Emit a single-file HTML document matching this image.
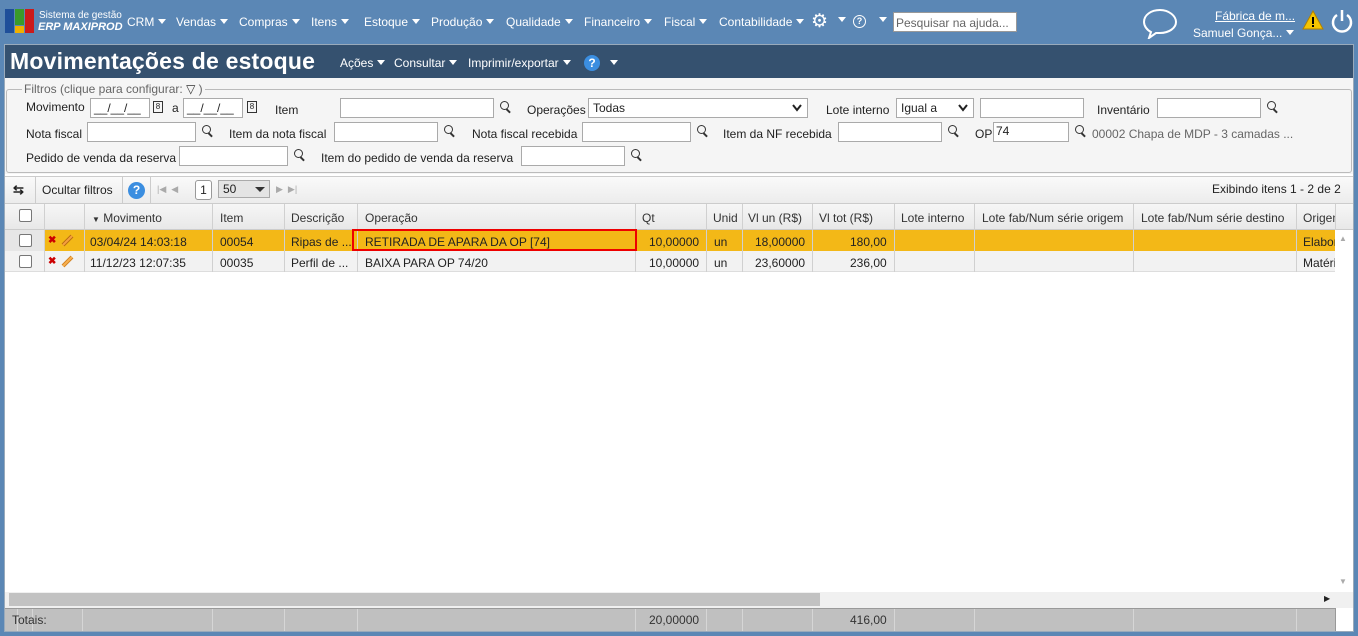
<!DOCTYPE html>
<html><head><meta charset="utf-8"><style>
*{box-sizing:border-box;margin:0;padding:0}
body{width:1358px;height:636px;overflow:hidden;background:#5b87b5;font-family:"Liberation Sans",sans-serif;font-size:12px;color:#222;position:relative}
.a{position:absolute;white-space:nowrap}
.w{color:#fff}
.tri{display:inline-block;width:0;height:0;border-left:4px solid transparent;border-right:4px solid transparent;border-top:5px solid #fff;vertical-align:2px;margin-left:4px}
.inp{position:absolute;height:20px;background:#fff;border:1px solid #aaa}
.mag{position:absolute;width:9px;height:9px;border:1.5px solid #333;border-radius:50%}
.mag:after{content:"";position:absolute;width:5px;height:1.5px;background:#333;left:5px;top:8px;transform:rotate(45deg)}
.col{position:absolute;top:0;bottom:0;border-left:1px solid #d0d0d0}
.cell{position:absolute;white-space:nowrap;overflow:hidden}
.cb{position:absolute;width:13px;height:13px;border:1px solid #777;border-radius:2px;background:#fff}
.chev{position:absolute;right:5px;top:5px}
</style></head><body>
<!-- top bar -->
<div class="a" style="left:5px;top:9px;width:9px;height:24px;background:#1f4f9a"></div>
<div class="a" style="left:15px;top:9px;width:9px;height:16px;background:#3a9a2a"></div>
<div class="a" style="left:15px;top:26px;width:9px;height:7px;background:#f0b000"></div>
<div class="a" style="left:25px;top:9px;width:9px;height:24px;background:#cc1a1a"></div>
<div class="a w" style="left:39px;top:10px;font-size:10px">Sistema de gestão</div>
<div class="a w" style="left:38px;top:21px;font-size:11px;font-style:italic;font-weight:bold">ERP MAXIPROD</div>
<div class="a w" style="left:127px;top:15px">CRM<span class="tri"></span></div>
<div class="a w" style="left:176px;top:15px">Vendas<span class="tri"></span></div>
<div class="a w" style="left:239px;top:15px">Compras<span class="tri"></span></div>
<div class="a w" style="left:311px;top:15px">Itens<span class="tri"></span></div>
<div class="a w" style="left:364px;top:15px">Estoque<span class="tri"></span></div>
<div class="a w" style="left:431px;top:15px">Produção<span class="tri"></span></div>
<div class="a w" style="left:506px;top:15px">Qualidade<span class="tri"></span></div>
<div class="a w" style="left:584px;top:15px">Financeiro<span class="tri"></span></div>
<div class="a w" style="left:664px;top:15px">Fiscal<span class="tri"></span></div>
<div class="a w" style="left:719px;top:15px">Contabilidade<span class="tri"></span></div>
<div class="a w" style="left:811px;top:10px;font-size:19px">⚙</div>
<div class="a" style="left:838px;top:17px;border-left:4px solid transparent;border-right:4px solid transparent;border-top:5px solid #fff"></div>
<div class="a w" style="left:853px;top:15px;width:13px;height:13px;border:1.5px solid #fff;border-radius:50%;font-size:9px;text-align:center;line-height:10px;font-weight:bold">?</div>
<div class="a" style="left:879px;top:17px;border-left:4px solid transparent;border-right:4px solid transparent;border-top:5px solid #fff"></div>
<div class="a" style="left:893px;top:12px;width:124px;height:20px;background:#fff;border:1px solid #999;color:#666;padding:3px 2px">Pesquisar na ajuda...</div>
<svg class="a" style="left:1141px;top:7px" width="38" height="32" viewBox="0 0 38 32"><path d="M19 3C10 3 3 8 3 15c0 4 3 8 7 10l-2 6 7-5c1 0 3 0 4 0 9 0 16-5 16-11S28 3 19 3z" fill="none" stroke="#fff" stroke-width="2"/></svg>
<div class="a w" style="left:1215px;top:9px;text-decoration:underline">Fábrica de m...</div>
<div class="a w" style="left:1193px;top:26px">Samuel Gonça...<span class="tri"></span></div>
<svg class="a" style="left:1302px;top:10px" width="22" height="20"><path d="M11 1L21 19H1z" fill="#f5c400" stroke="#b08000"/><rect x="10" y="7" width="2" height="7" fill="#000"/><rect x="10" y="15" width="2" height="2" fill="#000"/></svg>
<svg class="a" style="left:1330px;top:8px" width="24" height="26"><path d="M7 7A9 9 0 1 0 17 7" fill="none" stroke="#fff" stroke-width="2.5"/><path d="M12 2V13" stroke="#fff" stroke-width="2.5"/></svg>
<!-- main panel -->
<div class="a" style="left:4px;top:44px;width:1350px;height:588px;background:#fff;border:1px solid #9ab"></div>
<div class="a" style="left:5px;top:45px;width:1348px;height:33px;background:#35516f"></div>
<div class="a w" style="left:10px;top:48px;font-size:23px;font-weight:bold;letter-spacing:0.2px">Movimentações de estoque</div>
<div class="a w" style="left:340px;top:56px">Ações<span class="tri"></span></div>
<div class="a w" style="left:394px;top:56px">Consultar<span class="tri"></span></div>
<div class="a w" style="left:468px;top:56px">Imprimir/exportar<span class="tri"></span></div>
<div class="a w" style="left:584px;top:55px;width:16px;height:16px;border-radius:50%;background:#3b8ee0;font-weight:bold;text-align:center;line-height:16px;font-size:12px">?</div>
<div class="a" style="left:610px;top:60px;border-left:4px solid transparent;border-right:4px solid transparent;border-top:5px solid #fff"></div>
<!-- filters -->
<div class="a" style="left:5px;top:78px;width:1348px;height:96px;background:#f5f5f5"></div>
<div class="a" style="left:6px;top:89px;width:1346px;height:84px;border:1px solid #bbb;border-radius:3px"></div>
<div class="a" style="left:22px;top:82px;background:#f5f5f5;color:#666;padding:0 2px">Filtros (clique para configurar: <span style="color:#333">▽</span> )</div>
<div class="a" style="left:26px;top:100px">Movimento</div>
<div class="inp" style="left:90px;top:98px;width:60px;padding:2px 3px">__/__/__</div>
<div class="a" style="left:153px;top:101px;width:10px;height:12px;border:1px solid #333;font-size:8px;text-align:center">8</div>
<div class="a" style="left:172px;top:101px">a</div>
<div class="inp" style="left:183px;top:98px;width:60px;padding:2px 3px">__/__/__</div>
<div class="a" style="left:247px;top:101px;width:10px;height:12px;border:1px solid #333;font-size:8px;text-align:center">8</div>
<div class="a" style="left:275px;top:103px">Item</div>
<div class="inp" style="left:340px;top:98px;width:154px"></div><div class="mag" style="left:500px;top:101px"></div>
<div class="a" style="left:527px;top:103px">Operações</div>
<div class="inp" style="left:588px;top:98px;width:220px;padding:2px 4px">Todas<svg class="chev" width="10" height="8"><path d="M1 1L5 6 9 1" fill="none" stroke="#222" stroke-width="2"/></svg></div>
<div class="a" style="left:826px;top:103px">Lote interno</div>
<div class="inp" style="left:896px;top:98px;width:78px;padding:2px 4px">Igual a<svg class="chev" width="10" height="8"><path d="M1 1L5 6 9 1" fill="none" stroke="#222" stroke-width="2"/></svg></div>
<div class="inp" style="left:980px;top:98px;width:104px"></div>
<div class="a" style="left:1097px;top:103px">Inventário</div>
<div class="inp" style="left:1157px;top:98px;width:104px"></div><div class="mag" style="left:1267px;top:101px"></div>
<div class="a" style="left:26px;top:127px">Nota fiscal</div>
<div class="inp" style="left:87px;top:122px;width:109px"></div><div class="mag" style="left:202px;top:125px"></div>
<div class="a" style="left:229px;top:127px">Item da nota fiscal</div>
<div class="inp" style="left:334px;top:122px;width:104px"></div><div class="mag" style="left:444px;top:125px"></div>
<div class="a" style="left:472px;top:127px">Nota fiscal recebida</div>
<div class="inp" style="left:582px;top:122px;width:109px"></div><div class="mag" style="left:697px;top:125px"></div>
<div class="a" style="left:723px;top:127px">Item da NF recebida</div>
<div class="inp" style="left:838px;top:122px;width:104px"></div><div class="mag" style="left:948px;top:125px"></div>
<div class="a" style="left:975px;top:127px">OP</div>
<div class="inp" style="left:993px;top:122px;width:76px;padding:1px 2px">74</div><div class="mag" style="left:1075px;top:125px"></div>
<div class="a" style="left:1092px;top:127px;color:#666">00002 Chapa de MDP - 3 camadas ...</div>
<div class="a" style="left:26px;top:151px">Pedido de venda da reserva</div>
<div class="inp" style="left:179px;top:146px;width:109px"></div><div class="mag" style="left:294px;top:149px"></div>
<div class="a" style="left:321px;top:151px">Item do pedido de venda da reserva</div>
<div class="inp" style="left:521px;top:146px;width:104px"></div><div class="mag" style="left:631px;top:149px"></div>
<!-- toolbar -->
<div class="a" style="left:5px;top:176px;width:1348px;height:28px;background:linear-gradient(#fafafa,#ececec);border-top:1px solid #ccc;border-bottom:1px solid #ccc"></div>
<div class="a" style="left:13px;top:182px;font-size:13px;font-weight:bold">⇆</div>
<div class="a" style="left:35px;top:177px;height:26px;border-left:1px solid #ccc"></div>
<div class="a" style="left:42px;top:183px">Ocultar filtros</div>
<div class="a" style="left:122px;top:177px;height:26px;border-left:1px solid #ccc"></div>
<div class="a w" style="left:128px;top:182px;width:17px;height:17px;border-radius:50%;background:#3b8ee0;font-weight:bold;text-align:center;line-height:17px">?</div>
<div class="a" style="left:150px;top:177px;height:26px;border-left:1px solid #ccc"></div>
<div class="a" style="left:157px;top:184px;color:#aaa;font-size:9px">|◀ &nbsp;◀</div>
<div class="a" style="left:195px;top:180px;width:17px;height:20px;border:1px solid #999;border-radius:3px;background:#fff;text-align:center;line-height:18px">1</div>
<div class="a" style="left:218px;top:180px;width:52px;height:18px;border:1px solid #aaa;background:#e4e4e4;padding:1px 4px">50<span class="a" style="right:4px;top:6px;border-left:5px solid transparent;border-right:5px solid transparent;border-top:5px solid #333"></span></div>
<div class="a" style="left:276px;top:184px;color:#aaa;font-size:9px">▶ &nbsp;▶|</div>
<div class="a" style="left:1212px;top:182px">Exibindo itens 1 - 2 de 2</div>
<!-- header -->
<div class="a" style="left:5px;top:204px;width:1348px;height:26px;background:linear-gradient(#f6f6f6,#e8e8e8);border-bottom:1px solid #ccc"></div>
<!-- rows -->
<div class="a" style="left:5px;top:230px;width:1330px;height:21px;background:#f3b817"></div>
<div class="a" style="left:5px;top:230px;width:40px;height:21px;background:#e6e6e6"></div>
<div class="a" style="left:5px;top:251px;width:1330px;height:21px;background:#f2f2f2;border-bottom:1px solid #ddd"></div>
<div class="a" style="left:5px;top:204px;width:1330px;height:68px">
 <div class="col" style="left:39px"></div><div class="col" style="left:79px"></div><div class="col" style="left:207px"></div><div class="col" style="left:279px"></div><div class="col" style="left:352px"></div><div class="col" style="left:630px"></div><div class="col" style="left:701px"></div><div class="col" style="left:737px"></div><div class="col" style="left:807px"></div><div class="col" style="left:889px"></div><div class="col" style="left:969px"></div><div class="col" style="left:1128px"></div><div class="col" style="left:1291px"></div><div class="col" style="left:1330px"></div>
</div>
<div class="cb" style="left:19px;top:209px"></div><div class="cb" style="left:19px;top:234px"></div><div class="cb" style="left:19px;top:255px"></div>
<div class="a" style="left:92px;top:211px;color:#333"><span style="font-size:8px">▼</span> Movimento</div>
<div class="a" style="left:220px;top:211px;color:#333">Item</div>
<div class="a" style="left:291px;top:211px;color:#333">Descrição</div>
<div class="a" style="left:365px;top:211px;color:#333">Operação</div>
<div class="a" style="left:642px;top:211px;color:#333">Qt</div>
<div class="a" style="left:713px;top:211px;color:#333">Unid</div>
<div class="a" style="left:748px;top:211px;color:#333">Vl un (R$)</div>
<div class="a" style="left:819px;top:211px;color:#333">Vl tot (R$)</div>
<div class="a" style="left:901px;top:211px;color:#333">Lote interno</div>
<div class="a" style="left:982px;top:211px;color:#333">Lote fab/Num série origem</div>
<div class="a" style="left:1141px;top:211px;color:#333">Lote fab/Num série destino</div>
<div class="cell" style="left:1303px;top:211px;width:32px;color:#333">Origem</div>
<!-- row 1 -->
<div class="a" style="left:48px;top:235px;color:#c00;font-weight:bold;font-size:10px">✖</div>
<svg class="a" style="left:61px;top:233px" width="14" height="14"><path d="M2 12L11 3" stroke="#b86a10" stroke-width="4"/><path d="M2 12L11 3" stroke="#f5a040" stroke-width="2"/></svg>
<div class="a" style="left:90px;top:235px">03/04/24 14:03:18</div>
<div class="a" style="left:220px;top:235px">00054</div>
<div class="cell" style="left:291px;top:235px">Ripas de ...</div>
<div class="a" style="left:352px;top:229px;width:285px;height:22px;border:2px solid #e00"></div>
<div class="a" style="left:365px;top:235px">RETIRADA DE APARA DA OP [74]</div>
<div class="a" style="left:649px;top:235px">10,00000</div>
<div class="a" style="left:714px;top:235px">un</div>
<div class="a" style="left:755px;top:235px">18,00000</div>
<div class="a" style="left:850px;top:235px">180,00</div>
<div class="cell" style="left:1303px;top:235px;width:32px">Elaboração</div>
<!-- row 2 -->
<div class="a" style="left:48px;top:256px;color:#c00;font-weight:bold;font-size:10px">✖</div>
<svg class="a" style="left:61px;top:254px" width="14" height="14"><path d="M2 12L11 3" stroke="#d08020" stroke-width="4"/><path d="M2 12L11 3" stroke="#f7b050" stroke-width="2"/></svg>
<div class="a" style="left:90px;top:256px">11/12/23 12:07:35</div>
<div class="a" style="left:220px;top:256px">00035</div>
<div class="cell" style="left:291px;top:256px">Perfil de ...</div>
<div class="a" style="left:365px;top:256px">BAIXA PARA OP 74/20</div>
<div class="a" style="left:649px;top:256px">10,00000</div>
<div class="a" style="left:714px;top:256px">un</div>
<div class="a" style="left:755px;top:256px">23,60000</div>
<div class="a" style="left:850px;top:256px">236,00</div>
<div class="cell" style="left:1303px;top:256px;width:32px">Matéria</div>
<!-- scrollbars -->
<div class="a" style="left:1335px;top:230px;width:18px;height:362px;background:#fff"></div>
<div class="a" style="left:1339px;top:234px;color:#aaa;font-size:8px">▲</div>
<div class="a" style="left:1339px;top:577px;color:#aaa;font-size:8px">▼</div>
<div class="a" style="left:5px;top:592px;width:1348px;height:16px;background:#f0f0f0"></div>
<div class="a" style="left:9px;top:593px;width:811px;height:13px;background:#c2c2c2"></div>
<div class="a" style="left:1324px;top:594px;font-size:8px">▶</div>
<!-- totals -->
<div class="a" style="left:5px;top:608px;width:1330px;height:23px;background:#c0c0c0;border-top:1px solid #999">
 <div class="col" style="left:12px;border-color:#d6d6d6"></div><div class="col" style="left:27px;border-color:#d6d6d6"></div><div class="col" style="left:77px;border-color:#d6d6d6"></div><div class="col" style="left:207px;border-color:#d6d6d6"></div><div class="col" style="left:279px;border-color:#d6d6d6"></div><div class="col" style="left:352px;border-color:#d6d6d6"></div><div class="col" style="left:630px;border-color:#d6d6d6"></div><div class="col" style="left:701px;border-color:#d6d6d6"></div><div class="col" style="left:737px;border-color:#d6d6d6"></div><div class="col" style="left:807px;border-color:#d6d6d6"></div><div class="col" style="left:889px;border-color:#d6d6d6"></div><div class="col" style="left:969px;border-color:#d6d6d6"></div><div class="col" style="left:1128px;border-color:#d6d6d6"></div><div class="col" style="left:1291px;border-color:#d6d6d6"></div>
</div>
<div class="a" style="left:1335px;top:608px;width:18px;height:23px;background:#fff;border-left:1px solid #999"></div>
<div class="a" style="left:12px;top:613px;color:#333">Totais:</div>
<div class="a" style="left:649px;top:613px;color:#333">20,00000</div>
<div class="a" style="left:850px;top:613px;color:#333">416,00</div>
</body></html>
